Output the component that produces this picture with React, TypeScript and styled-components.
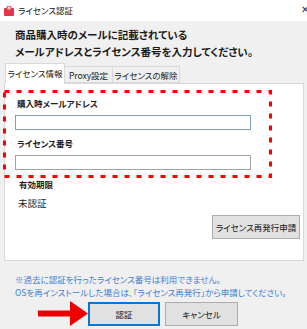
import React from "react";
import styled, { createGlobalStyle } from "styled-components";

const Global = createGlobalStyle`
  html, body { margin: 0; padding: 0; }
  body {
    width: 307px; height: 329px; overflow: hidden;
    background: #f0f0f0;
    font-family: "Noto Sans CJK JP", "Noto Sans", sans-serif;
    font-feature-settings: "palt";
    color: #000;
  }
  * { box-sizing: border-box; }
`;

const Window = styled.div`
  width: 307px;
  height: 329px;
  display: flex;
  flex-direction: column;
  background: #f0f0f0;
  overflow: hidden;
`;

const TitleBar = styled.div`
  height: 21px;
  background: #fff;
  display: flex;
  align-items: center;
  padding-left: 4px;
`;

const Title = styled.span`
  font-size: 8.5px;
  margin-left: 4px;
  color: #111;
  line-height: 21px;
`;

const Close = styled.span`
  margin-left: auto;
  margin-right: -6px;
  font-size: 10px;
  color: #333;
  line-height: 1;
  width: 12px;
  margin-top: -3px;
`;

const Header = styled.div`
  padding: 5px 15px 0;
  font-weight: 700;
  font-size: 10.5px;
  line-height: 17px;
  color: #1a1a1a;
`;

const TabRow = styled.div`
  display: flex;
  align-items: flex-end;
  height: 19px;
  margin-top: 4px;
  padding-left: 5px;
  position: relative;
  z-index: 1;
`;

const Tab = styled.div<{ $active?: boolean; $w: number }>`
  width: ${(p) => p.$w}px;
  height: ${(p) => (p.$active ? 21 : 17)}px;
  margin-bottom: ${(p) => (p.$active ? -1 : 0)}px;
  background: ${(p) => (p.$active ? "#fff" : "#f0f0f0")};
  border: 1px solid #d9d9d9;
  border-bottom: ${(p) => (p.$active ? "none" : "1px solid #d9d9d9")};
  border-left-width: ${(p) => (p.$active ? 1 : 0)}px;
  font-size: 8.5px;
  color: #1a1a1a;
  display: flex;
  align-items: center;
  justify-content: center;
  padding-bottom: ${(p) => (p.$active ? 2 : 0)}px;
`;

const Panel = styled.div`
  margin: 0 3px 0 4px;
  height: 178px;
  background: #fff;
  border: 1px solid #d9d9d9;
  display: flex;
  flex-direction: column;
`;

const Annotated = styled.div`
  position: relative;
  margin-top: 6px;
  width: 267px;
  height: 88px;
  padding: 7px 0 0 10px;
`;

const DashBox = styled.svg`
  position: absolute;
  left: -2px;
  top: 0;
  width: 269px;
  height: 88px;
  overflow: visible;
  pointer-events: none;
`;

const Label = styled.div<{ $gap?: number }>`
  font-size: 8.5px;
  font-weight: 700;
  line-height: 12px;
  color: #222;
  padding-left: 2px;
  margin-top: ${(p) => p.$gap ?? 0}px;
`;

const Input = styled.div<{ $focus?: boolean }>`
  width: 236px;
  height: 15px;
  margin-top: 6px;
  border: 1px solid ${(p) => (p.$focus ? "#7f9db9" : "#a3a3a3")};
  background: #fff;
`;

const Section = styled.div`
  padding-left: 12px;
`;

const Value = styled.div`
  font-size: 9.5px;
  line-height: 14px;
  color: #222;
  margin-top: 6px;
  padding-left: 1px;
`;

const ButtonRowRight = styled.div`
  display: flex;
  justify-content: flex-end;
  padding-right: 3px;
  margin-top: 5px;
`;

const Button = styled.div<{ $w: number; $primary?: boolean }>`
  width: ${(p) => p.$w}px;
  height: 24px;
  background: #e1e1e1;
  border: 1px solid ${(p) => (p.$primary ? "#0078d7" : "#adadad")};
  box-shadow: ${(p) => (p.$primary ? "inset 0 0 0 1px #0078d7" : "none")};
  font-size: 8.5px;
  color: #111;
  display: flex;
  align-items: center;
  justify-content: center;
`;

const Notes = styled.div`
  margin-top: 12px;
  padding-left: 15px;
  font-size: 8.5px;
  line-height: 13px;
  color: #3b7fd4;
  white-space: nowrap;
`;

const Footer = styled.div`
  display: flex;
  align-items: center;
  gap: 5px;
  margin-top: 2px;
  padding-left: 38px;
`;

const Arrow = styled.svg`
  width: 50px;
  height: 25px;
  margin-right: -5px;
  flex: none;
`;

function AppIcon() {
  return (
    <svg width="10" height="10" viewBox="0 0 10 10">
      <rect x="0" y="2" width="10" height="8" rx="1" fill="#e3364b" />
      <path d="M3 3.5 V2 a2 2 0 0 1 4 0 V3.5" fill="none" stroke="#e3364b" strokeWidth="1.2" />
      <rect x="3.5" y="2" width="3" height="1.5" fill="#fbd0d6" />
    </svg>
  );
}

export default function App() {
  return (
    <>
      <Global />
      <Window>
        <TitleBar>
          <AppIcon />
          <Title>ライセンス認証</Title>
          <Close>✕</Close>
        </TitleBar>
        <Header>
          商品購入時のメールに記載されている
          <br />
          メールアドレスとライセンス番号を入力してください。
        </Header>
        <TabRow>
          <Tab $active $w={60}>ライセンス情報</Tab>
          <Tab $w={48}>Proxy設定</Tab>
          <Tab $w={67}>ライセンスの解除</Tab>
        </TabRow>
        <Panel>
          <Annotated>
            <DashBox viewBox="0 0 269 88">
              <rect
                x="1.5"
                y="1.5"
                width="266"
                height="85"
                fill="none"
                stroke="#ff0000"
                strokeWidth="3"
                strokeDasharray="5 7"
              />
            </DashBox>
            <Label>購入時メールアドレス</Label>
            <Input $focus />
            <Label $gap={7}>ライセンス番号</Label>
            <Input />
          </Annotated>
          <Section>
            <Label>有効期限</Label>
            <Value>未認証</Value>
          </Section>
          <ButtonRowRight>
            <Button $w={88}>ライセンス再発行申請</Button>
          </ButtonRowRight>
        </Panel>
        <Notes>
          ※過去に認証を行ったライセンス番号は利用できません。
          <br />
          OSを再インストールした場合は、「ライセンス再発行」から申請してください。
        </Notes>
        <Footer>
          <Arrow viewBox="0 0 50 25">
            <polygon points="0,9.5 32,9.5 32,0 50,12.5 32,25 32,15.5 0,15.5" fill="#ee0000" />
          </Arrow>
          <Button $w={72} $primary>認証</Button>
          <Button $w={73}>キャンセル</Button>
        </Footer>
      </Window>
    </>
  );
}
